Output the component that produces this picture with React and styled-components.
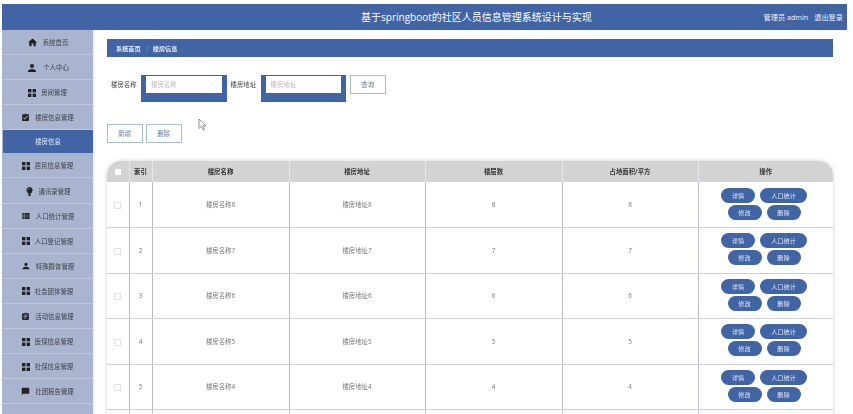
import styled, { createGlobalStyle } from "styled-components";
import { MdHome, MdPerson, MdAssignmentTurnedIn, MdAssignment, MdViewList, MdChatBubble } from "react-icons/md";
import { FaLightbulb } from "react-icons/fa";

const Global = createGlobalStyle`
  html, body {
    margin: 0;
    height: 414px;
    overflow: hidden;
    background: #fff;
  }
  body {
    font-family: "Open Sans", "Noto Sans CJK SC", sans-serif;
  }
`;

function GridIcon() {
  return (
    <svg width="8" height="8" viewBox="0 0 8 8">
      <rect x="0" y="0" width="3.4" height="3.4" fill="#222" />
      <rect x="4.6" y="0" width="3.4" height="3.4" fill="#222" />
      <rect x="0" y="4.6" width="3.4" height="3.4" fill="#222" />
      <rect x="4.6" y="4.6" width="3.4" height="3.4" fill="#222" />
    </svg>
  );
}

const menu = [
  { label: "系统首页", icon: <MdHome size={11} /> },
  { label: "个人中心", icon: <MdPerson size={12} /> },
  { label: "房间管理", icon: <GridIcon /> },
  { label: "楼房信息管理", icon: <MdAssignmentTurnedIn size={9} /> },
  { label: "楼房信息", active: true },
  { label: "居民信息管理", icon: <GridIcon /> },
  { label: "通讯录管理", icon: <FaLightbulb size={9} /> },
  { label: "人口统计管理", icon: <MdViewList size={10} /> },
  { label: "人口登记管理", icon: <GridIcon /> },
  { label: "特殊群体管理", icon: <MdPerson size={10} /> },
  { label: "社会团体管理", icon: <GridIcon /> },
  { label: "活动信息管理", icon: <MdAssignment size={9} /> },
  { label: "医保信息管理", icon: <GridIcon /> },
  { label: "社保信息管理", icon: <GridIcon /> },
  { label: "社团报告管理", icon: <MdChatBubble size={9} /> },
  { label: "" },
];

const rows = [
  { id: 1, name: "楼房名称8", addr: "楼房地址8", floors: 8, area: 8 },
  { id: 2, name: "楼房名称7", addr: "楼房地址7", floors: 7, area: 7 },
  { id: 3, name: "楼房名称6", addr: "楼房地址6", floors: 6, area: 6 },
  { id: 4, name: "楼房名称5", addr: "楼房地址5", floors: 5, area: 5 },
  { id: 5, name: "楼房名称4", addr: "楼房地址4", floors: 4, area: 4 },
];

export default function App() {
  return (
    <Page>
      <Global />
      <Header>
        <Title>基于springboot的社区人员信息管理系统设计与实现</Title>
        <UserBox>
          <span>管理员 admin</span>
          <span>退出登录</span>
        </UserBox>
      </Header>
      <Body>
        <Sidebar>
          {menu.map((item, i) => (
            <MenuItem key={i} $active={item.active}>
              {item.icon && <MenuIcon>{item.icon}</MenuIcon>}
              {item.label}
            </MenuItem>
          ))}
        </Sidebar>
        <Main>
          <Breadcrumb>
            <b>系统首页</b>
            <Sep>⋮</Sep>
            <b>楼房信息</b>
          </Breadcrumb>
          <SearchRow>
            <FieldLabel>楼房名称</FieldLabel>
            <InputWrap>
              <SearchInput placeholder="楼房名称" readOnly />
            </InputWrap>
            <FieldLabel>楼房地址</FieldLabel>
            <InputWrap>
              <SearchInput placeholder="楼房地址" readOnly />
            </InputWrap>
            <OutlineButton>查询</OutlineButton>
          </SearchRow>
          <ActionRow>
            <OutlineButton>新增</OutlineButton>
            <OutlineButton>删除</OutlineButton>
          </ActionRow>
          <TableCard>
            <Table>
              <colgroup>
                <col width="22" />
                <col width="23" />
                <col width="137" />
                <col width="136" />
                <col width="137" />
                <col width="136" />
                <col width="135" />
              </colgroup>
              <thead>
                <tr>
                  <Th><HeadCheck /></Th>
                  <Th>索引</Th>
                  <Th>楼房名称</Th>
                  <Th>楼房地址</Th>
                  <Th>楼层数</Th>
                  <Th>占地面积/平方</Th>
                  <Th>操作</Th>
                </tr>
              </thead>
              <tbody>
                {rows.map((row) => (
                  <tr key={row.id}>
                    <Td><RowCheck /></Td>
                    <Td>{row.id}</Td>
                    <Td>{row.name}</Td>
                    <Td>{row.addr}</Td>
                    <Td>{row.floors}</Td>
                    <Td>{row.area}</Td>
                    <Td>
                      <PillGroup>
                        <Pill>详情</Pill>
                        <Pill $wide>人口统计</Pill>
                        <Pill>修改</Pill>
                        <Pill>删除</Pill>
                      </PillGroup>
                    </Td>
                  </tr>
                ))}
                <tr>
                  {[0, 1, 2, 3, 4, 5, 6].map((n) => (
                    <Td key={n} />
                  ))}
                </tr>
              </tbody>
            </Table>
          </TableCard>
        </Main>
      </Body>
      <Cursor width="9" height="13" viewBox="0 0 9 13">
        <path d="M1 1v9.5l2.4-2.2 1.7 3.8 1.5-.7-1.7-3.6h3.1z" fill="#fff" stroke="#777" strokeWidth="0.8" />
      </Cursor>
    </Page>
  );
}

const Page = styled.div`
  position: relative;
  width: 853px;
  height: 414px;
  padding: 4px 6px 0 2px;
  box-sizing: border-box;
  overflow: hidden;
  filter: blur(0.45px);
`;

const Header = styled.header`
  display: flex;
  align-items: center;
  justify-content: flex-end;
  position: relative;
  height: 26px;
  background: #4164a4;
  color: #fff;
  padding-right: 4px;
`;

const Title = styled.div`
  position: absolute;
  left: 359px;
  font-size: 10px;
  line-height: 26px;
  white-space: nowrap;
`;

const UserBox = styled.div`
  display: flex;
  gap: 6px;
  font-size: 7.2px;
  color: #eef1f7;
`;

const Body = styled.div`
  display: flex;
  align-items: flex-start;
`;

const Sidebar = styled.nav`
  width: 91px;
  flex-shrink: 0;
  background: #a9b5ce;
  box-shadow: 1px 0 3px rgba(0, 0, 0, 0.1);
`;

const MenuItem = styled.div`
  display: flex;
  align-items: center;
  justify-content: center;
  gap: 5px;
  box-sizing: border-box;
  font-size: 6.4px;
  height: ${(p) => (p.$active ? "23px" : "25.1px")};
  padding-top: ${(p) => (p.$active ? "0" : "1px")};
  color: ${(p) => (p.$active ? "#e6eaf3" : "#3c4048")};
  background: ${(p) => (p.$active ? "#4164a4" : "transparent")};
  margin-left: ${(p) => (p.$active ? "1px" : "0")};
  border-bottom: ${(p) => (p.$active ? "0" : "1px solid #bcc6d9")};
`;

const MenuIcon = styled.span`
  display: inline-flex;
  color: #222;
`;

const Main = styled.main`
  flex: 1;
  min-width: 0;
  padding: 9px 14px 0 14px;
`;

const Breadcrumb = styled.div`
  display: flex;
  align-items: center;
  gap: 3px;
  height: 18px;
  padding-left: 9px;
  background: #4164a4;
  color: #e6eaf3;
  font-size: 6.2px;
`;

const Sep = styled.span`
  color: #a9b5ce;
`;

const SearchRow = styled.div`
  display: flex;
  align-items: flex-start;
  margin-top: 18px;
  padding-left: 4px;
`;

const FieldLabel = styled.label`
  width: 30px;
  font-size: 6.4px;
  line-height: 20px;
  color: #444;
  white-space: nowrap;
`;

const InputWrap = styled.div`
  box-sizing: border-box;
  width: 85.5px;
  height: 27px;
  margin-right: 4px;
  padding: 1px 5px 9px;
  background: #4164a4;
`;

const SearchInput = styled.input`
  display: block;
  box-sizing: border-box;
  width: 100%;
  height: 17px;
  border: 0;
  outline: 0;
  padding: 0 5px;
  font: 6.4px "Open Sans", "Noto Sans CJK SC", sans-serif;
  background: #fff;
  &::placeholder {
    color: #bbb;
  }
`;

const OutlineButton = styled.button`
  box-sizing: border-box;
  width: 35.5px;
  height: 19px;
  padding: 0;
  background: #fff;
  border: 1px solid #a5bdd4;
  border-bottom-width: 1.5px;
  color: #5f76a6;
  font: 6.4px "Open Sans", "Noto Sans CJK SC", sans-serif;
`;

const ActionRow = styled.div`
  display: flex;
  gap: 3.5px;
  margin-top: 22px;
`;

const TableCard = styled.div`
  margin-top: 18px;
  width: 726px;
  border-radius: 14px 14px 0 0;
  overflow: hidden;
  box-shadow: 0 0 4px rgba(0, 0, 0, 0.18);
`;

const Table = styled.table`
  width: 100%;
  table-layout: fixed;
  border-collapse: collapse;
  background: #fff;
`;

const Th = styled.th`
  height: 21px;
  padding: 0;
  background: #d3d3d3;
  border-right: 1px solid #e6e6e6;
  font-size: 6.4px;
  font-weight: 700;
  color: #333;
  &:last-child {
    border-right: 0;
  }
`;

const Td = styled.td`
  height: 45.5px;
  box-sizing: border-box;
  padding: 0;
  text-align: center;
  font-size: 6.4px;
  color: #777;
  border-right: 1px solid #bcbccd;
  border-bottom: 1.5px solid #cfcfda;
`;

const HeadCheck = styled.span`
  display: inline-block;
  width: 6px;
  height: 6px;
  background: #fff;
  vertical-align: middle;
`;

const RowCheck = styled.span`
  display: inline-block;
  box-sizing: border-box;
  width: 7px;
  height: 7px;
  border: 1px solid #e2e2e2;
  vertical-align: middle;
`;

const PillGroup = styled.div`
  display: flex;
  flex-wrap: wrap;
  justify-content: center;
  gap: 2px 5px;
  width: 90px;
  margin: -2px 0 0 20.5px;
`;

const Pill = styled.span`
  display: block;
  width: ${(p) => (p.$wide ? "47px" : "34px")};
  height: 15px;
  line-height: 15px;
  border-radius: 8px;
  background: #4164a4;
  color: #dfe5f0;
  font-size: 6.2px;
`;

const Cursor = styled.svg`
  position: absolute;
  left: 198px;
  top: 118px;
`;
